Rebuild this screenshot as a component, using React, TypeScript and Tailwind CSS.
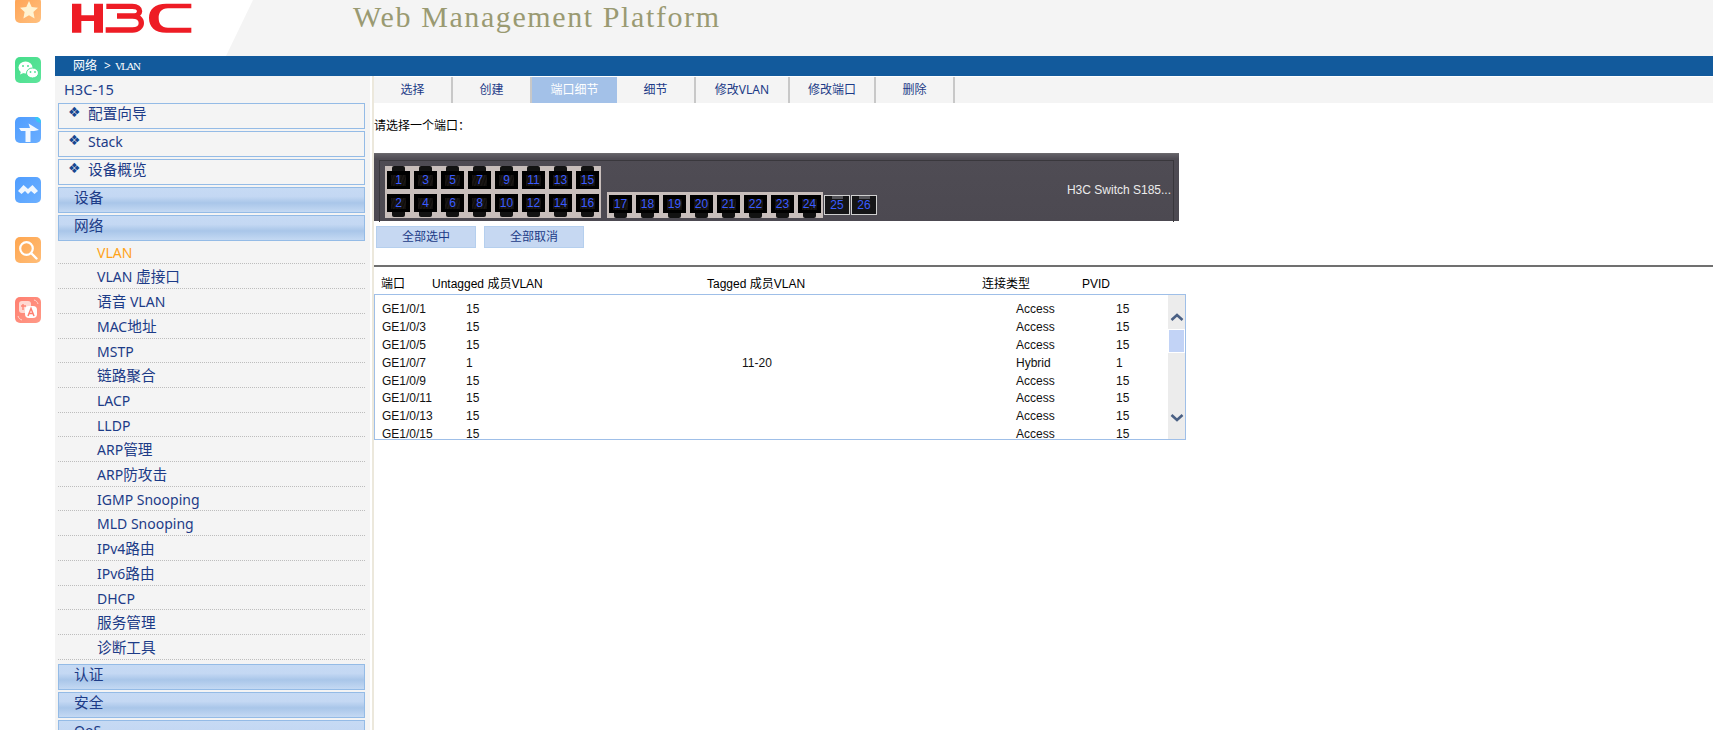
import React from "react";

const sans = "[font-family:'Noto_Sans','Noto_Sans_CJK_SC',sans-serif]";

function Mixed({ text }: { text: string }) {
  const parts = text.split(/([\u4e00-\u9fff]+)/).filter(Boolean);
  return (
    <>
      {parts.map((p, i) =>
        /[\u4e00-\u9fff]/.test(p) ? (
          <span key={i} className="text-[14.67px]">{p}</span>
        ) : (
          <span key={i} className="text-[14px] whitespace-pre">{p}</span>
        )
      )}
    </>
  );
}

function AppIcon({ from, to, children }: { from: string; to: string; children: React.ReactNode }) {
  const id = "g" + from.slice(1) + to.slice(1);
  return (
    <svg width="26" height="26" viewBox="0 0 26 26" className="block shrink-0">
      <defs>
        <linearGradient id={id} x1="0" y1="0" x2="1" y2="1">
          <stop offset="0" stopColor={from} />
          <stop offset="1" stopColor={to} />
        </linearGradient>
      </defs>
      <rect width="26" height="26" rx="5" fill={`url(#${id})`} />
      {children}
    </svg>
  );
}

function IconRail() {
  return (
    <div className="w-[55px] shrink-0 bg-white flex flex-col items-start pl-[15px] gap-[34px] -mt-[3px]">
      <AppIcon from="#ffa354" to="#ffc07f">
        <path d="M14 4l2.700 6 6.300.8-4.600 4.300 1.200 6.400-5.600-3.200-5.600 3.200 1.200-6.400L5 10.800l6.300-.8z" fill="#fff3d2" />
      </AppIcon>
      <AppIcon from="#45dd8a" to="#5fe59c">
        <ellipse cx="10.500" cy="10.500" rx="7" ry="6" fill="#fff" />
        <path d="M6 14.500l-1 3 3.500-1.500z" fill="#fff" />
        <ellipse cx="17.500" cy="16" rx="6" ry="5" fill="#fff" stroke="#4fe093" strokeWidth="1" />
        <circle cx="8" cy="9" r="1" fill="#4fe093" />
        <circle cx="13" cy="9" r="1" fill="#4fe093" />
        <circle cx="15.500" cy="15" r=".9" fill="#4fe093" />
        <circle cx="20" cy="15" r=".9" fill="#4fe093" />
      </AppIcon>
      <AppIcon from="#4f9dff" to="#6aaeff">
        <path d="M20 0h1a5 5 0 0 1 5 5v1a6 6 0 0 1-6-6z" fill="#35c8f5" />
        <path d="M4 11h11l-1.500-4.500L24 13l-5 1h-3.500v11h-5V14H6z" fill="#fff" fillOpacity=".92" />
      </AppIcon>
      <AppIcon from="#4f9dff" to="#6cb0ff">
        <path d="M3 14l5.500-6 4.500 4 4.500-4L23 14l-3.500 3-3.500-3-3 3-3-3-3.500 3z" fill="#fff" fillOpacity=".9" />
      </AppIcon>
      <AppIcon from="#ffa64f" to="#ffbd78">
        <circle cx="11.500" cy="11.500" r="6.300" fill="none" stroke="#fff" strokeWidth="2.200" />
        <path d="M16.500 16.500l5 5" stroke="#fff" strokeWidth="2.400" strokeLinecap="round" />
      </AppIcon>
      <AppIcon from="#ff7f70" to="#ff9a88">
        <rect x="4" y="4" width="12" height="12" rx="3" fill="#ffd9d2" />
        <path d="M8 7v6M6 9h5" stroke="#ff8575" strokeWidth="1.400" fill="none" />
        <rect x="10" y="9" width="12" height="12" rx="4" fill="#fff" />
        <path d="M13 19l3-7.500 3 7.500M14 16.500h4" stroke="#ff7f70" strokeWidth="1.500" fill="none" />
        <path d="M3 19c.5 2 2 3.500 4 4M23 7c-.5-2-2-3.500-4-4" stroke="#ffd9d2" strokeWidth="1" fill="none" />
      </AppIcon>
    </div>
  );
}

function Logo() {
  return (
    <svg width="120" height="32" viewBox="37 0 360 96" className="block">
      <path d="M37 8h28v35h38V8h27v87h-27V60H65v35H37z" fill="#ee1c25" />
      <path d="M140 16H218C247 16 247 45 218 45H172M218 45C254 45 254 87 218 87H138" fill="none" stroke="#ee1c25" strokeWidth="16" />
      <path d="M395 8H320C285 8 268 25 268 51C268 78 285 95 320 95H395V80H325C305 80 297 68 297 51C297 35 305 22 325 22H395Z" fill="#ee1c25" />
    </svg>
  );
}

function Header() {
  return (
    <div className="h-[56px] flex bg-white overflow-hidden">
      <div className="w-[171px] shrink-0 pl-[17px] pt-[1px]">
        <Logo />
      </div>
      <div className="flex-1 bg-[#f4f4f4] [clip-path:polygon(27px_0,100%_0,100%_100%,0_100%)] pl-[127px]">
        <div className="[font-family:'Liberation_Serif',serif] text-[30px] tracking-[1.600px] leading-[33px] text-[#9a9a72] whitespace-nowrap">Web Management Platform</div>
      </div>
    </div>
  );
}

const groupBtn =
  "h-[26px] border border-[#94bbe6] bg-[linear-gradient(to_bottom,#c6daf4_0%,#c4d8f3_35%,#a9c6e9_62%,#c4d9f3_100%)] pl-[15px] leading-[19px] text-[#1c3b87] shrink-0";

function Diamond({ label }: { label: string }) {
  return (
    <div className="h-[26px] border border-[#94bbe6] bg-[#f4f4f4] flex items-start pl-[9px] text-[#1c3b87] shrink-0">
      <span className="[font-family:'DejaVu_Sans',sans-serif] text-[14px] leading-[16px] w-[20px] text-[#17468f]">❖</span>
      <span className="leading-[18px]">
        <Mixed text={label} />
      </span>
    </div>
  );
}

const subItems: [string, string][] = [
  ["VLAN", "h-[23px]"],
  ["VLAN 虚接口", "h-[25px]"],
  ["语音 VLAN", "h-[25px]"],
  ["MAC地址", "h-[25px]"],
  ["MSTP", "h-[24px]"],
  ["链路聚合", "h-[25px]"],
  ["LACP", "h-[25px]"],
  ["LLDP", "h-[24px]"],
  ["ARP管理", "h-[25px]"],
  ["ARP防攻击", "h-[25px]"],
  ["IGMP Snooping", "h-[24px]"],
  ["MLD Snooping", "h-[25px]"],
  ["IPv4路由", "h-[25px]"],
  ["IPv6路由", "h-[25px]"],
  ["DHCP", "h-[24px]"],
  ["服务管理", "h-[25px]"],
  ["诊断工具", "h-[25px]"],
];

function Sidebar() {
  return (
    <div className={`w-[315px] shrink-0 bg-[#f4f4f4] pl-[3px] pr-[5px] flex flex-col overflow-hidden ${sans}`}>
      <div className="h-[27px] shrink-0 pl-[6px] pb-[2px] flex items-center text-[#1c3f8c] text-[14.67px]">H3C-15</div>
      <div className="flex flex-col gap-[2px] shrink-0">
        <Diamond label="配置向导" />
        <Diamond label="Stack" />
        <Diamond label="设备概览" />
        <div className={groupBtn}><Mixed text="设备" /></div>
        <div className={groupBtn}><Mixed text="网络" /></div>
      </div>
      <div className="flex flex-col shrink-0">
        {subItems.map(([label, h], i) => (
          <div
            key={label}
            className={`${h} shrink-0 border-b border-dotted border-[#bdbdbd] pl-[39px] flex items-center ${
              i === 0 ? "text-[#ffa31a]" : "text-[#1c3b87]"
            }`}
          >
            <span><Mixed text={label} /></span>
          </div>
        ))}
      </div>
      <div className="flex flex-col gap-[2px] mt-[4px] shrink-0">
        <div className={groupBtn}><Mixed text="认证" /></div>
        <div className={groupBtn}><Mixed text="安全" /></div>
        <div className={groupBtn}><Mixed text="QoS" /></div>
      </div>
    </div>
  );
}

const tabs: [string, string, boolean][] = [
  ["选择", "w-[79px]", false],
  ["创建", "w-[79px]", false],
  ["端口细节", "w-[85px]", true],
  ["细节", "w-[79px]", false],
  ["修改VLAN", "w-[94px]", false],
  ["修改端口", "w-[86px]", false],
  ["删除", "w-[79px]", false],
];

function Tabs() {
  return (
    <div className={`mt-[1px] h-[26px] bg-[#f4f4f4] flex text-[12px] ${sans}`}>
      {tabs.map(([t, w, active]) => (
        <div
          key={t}
          className={`${w} flex items-center justify-center ${
            active ? "bg-[#a3c1e8] text-white" : "text-[#1c3b87] border-r-2 border-[#c8c8c8]"
          }`}
        >
          {t}
        </div>
      ))}
    </div>
  );
}

function Port({ n, up }: { n: number; up: boolean }) {
  return (
    <div className="w-[23px] flex flex-col items-center">
      {up && <div className="w-[13px] h-[5px] bg-[#121212] rounded-t-[2px]" />}
      <div className="w-[23px] h-[18px] bg-black flex items-center justify-center">
        <div className="w-[15px] h-[11px] bg-[repeating-linear-gradient(110deg,#1c1815_0px,#0e0c0b_2px,#1c1815_3px)] flex items-center justify-center text-[#3a5cff] text-[12px] leading-none [font-family:'Liberation_Sans',sans-serif] whitespace-nowrap">
          {n}
        </div>
      </div>
      {!up && <div className="w-[13px] h-[5px] bg-[#121212] rounded-b-[2px]" />}
    </div>
  );
}

function SwitchPanel() {
  const top = [1, 3, 5, 7, 9, 11, 13, 15];
  const bot = [2, 4, 6, 8, 10, 12, 14, 16];
  const bot2 = [17, 18, 19, 20, 21, 22, 23, 24];
  return (
    <div className="mt-[18px] w-[805px] h-[68px] pt-[6px] pl-[5px] pr-[5px] border-t border-[#6a686c] bg-[linear-gradient(to_bottom,#626066_0px,#4f4c54_5px,#4c4951_100%)]">
      <div className="h-[62px] border-l border-t border-r border-[#39373c] pl-[5px] pr-[2px] pt-[5px] flex items-start">
        <div className="w-[216px] h-[52px] bg-[#c8bebb] px-[2px] flex flex-col gap-[5px] shrink-0">
          <div className="flex gap-[4px]">{top.map((n) => <Port key={n} n={n} up />)}</div>
          <div className="flex gap-[4px]">{bot.map((n) => <Port key={n} n={n} up={false} />)}</div>
        </div>
        <div className="ml-[6px] mt-[26px] w-[216px] h-[26px] bg-[#c8bebb] px-[2px] pt-[3px] shrink-0 flex gap-[4px]">
          {bot2.map((n) => <Port key={n} n={n} up={false} />)}
        </div>
        {[25, 26].map((n) => (
          <div key={n} className="ml-[1px] mt-[29px] w-[26px] h-[20px] border border-[#cfcfcf] bg-[#151517] flex flex-col items-center shrink-0 [font-family:'Liberation_Sans',sans-serif]">
            <div className="w-[11px] h-[3px] bg-[#55555a] shrink-0" />
            <div className="text-[#3a5cff] text-[12px] leading-[13px]">{n}</div>
          </div>
        ))}
        <div className="ml-auto mt-[15px] text-[12px] leading-[18px] text-[#ececec] [font-family:'Liberation_Sans',sans-serif] whitespace-nowrap">H3C Switch S185...</div>
      </div>
    </div>
  );
}

type Row = [string, string, string, string, string];
const rows: [Row, string][] = [
  [["GE1/0/1", "15", "", "Access", "15"], "h-[18px]"],
  [["GE1/0/3", "15", "", "Access", "15"], "h-[18px]"],
  [["GE1/0/5", "15", "", "Access", "15"], "h-[18px]"],
  [["GE1/0/7", "1", "11-20", "Hybrid", "1"], "h-[18px]"],
  [["GE1/0/9", "15", "", "Access", "15"], "h-[17px]"],
  [["GE1/0/11", "15", "", "Access", "15"], "h-[18px]"],
  [["GE1/0/13", "15", "", "Access", "15"], "h-[18px]"],
  [["GE1/0/15", "15", "", "Access", "15"], "h-[18px]"],
];

function PortTable() {
  return (
    <div className="text-[12px] text-black [font-family:'Liberation_Sans','Noto_Sans_CJK_SC',sans-serif]">
      <div className="h-[27px] pt-[7px] flex items-center pl-[7px]">
        <div className="w-[51px]">端口</div>
        <div className="w-[275px]">Untagged 成员VLAN</div>
        <div className="w-[275px]">Tagged 成员VLAN</div>
        <div className="w-[100px]">连接类型</div>
        <div>PVID</div>
      </div>
      <div className="w-[812px] h-[146px] border border-[#9fbfe8] flex overflow-hidden">
        <div className="flex-1 pt-[5px] pl-[7px] overflow-hidden text-[#111]">
          {rows.map(([r, h]) => (
            <div key={r[0]} className={`${h} flex items-center shrink-0`}>
              <div className="w-[84px]">{r[0]}</div>
              <div className="w-[276px]">{r[1]}</div>
              <div className="w-[274px]">{r[2]}</div>
              <div className="w-[100px]">{r[3]}</div>
              <div>{r[4]}</div>
            </div>
          ))}
        </div>
        <div className="w-[17px] shrink-0 bg-[#ececec] flex flex-col items-center">
          <svg width="14" height="8" viewBox="0 0 14 8" className="mt-[18px] block">
            <path d="M1.500 7L7 2l5.500 5" fill="none" stroke="#4a6084" strokeWidth="2.600" />
          </svg>
          <div className="mt-[8px] w-[17px] h-[24px] border border-white bg-[#c2d3f6]" />
          <svg width="14" height="8" viewBox="0 0 14 8" className="mt-[61px] block">
            <path d="M1.500 1L7 6l5.500-5" fill="none" stroke="#4a6084" strokeWidth="2.600" />
          </svg>
        </div>
      </div>
    </div>
  );
}

function Main() {
  return (
    <div className="flex-1 flex min-w-0 bg-white">
      <div className="w-[2px] shrink-0 bg-white" />
      <div className="w-[2px] shrink-0 bg-[#ece8dc]" />
      <div className="flex-1 min-w-0">
        <Tabs />
        <div className={`mt-[14px] h-[18px] leading-[18px] text-[12px] text-black ${sans}`}>请选择一个端口：</div>
        <SwitchPanel />
        <div className={`mt-[5px] ml-[2px] flex gap-[8px] text-[12px] text-[#1c3b87] ${sans}`}>
          <div className="w-[100px] h-[22px] bg-[#c6d8f2] border border-[#b5cfee] flex items-center justify-center">全部选中</div>
          <div className="w-[100px] h-[22px] bg-[#c6d8f2] border border-[#b5cfee] flex items-center justify-center">全部取消</div>
        </div>
        <div className="mt-[17px] h-[2px] bg-[#707070]" />
        <PortTable />
      </div>
    </div>
  );
}

export default function App() {
  return (
    <div className="w-[1713px] h-[730px] overflow-hidden flex bg-white">
      <IconRail />
      <div className="flex-1 min-w-0 flex flex-col">
        <Header />
        <div className={`h-[20px] bg-[#125a9c] pl-[18px] flex items-center text-white text-[12px] ${sans}`}>
          <span>网络</span>
          <span className="ml-[7px] text-[12px]">&gt;</span>
          <span className="ml-[4px] [font-family:'Liberation_Serif',serif] text-[11px] tracking-[-1.500px]">VLAN</span>
        </div>
        <div className="flex-1 flex min-h-0">
          <Sidebar />
          <Main />
        </div>
      </div>
    </div>
  );
}
